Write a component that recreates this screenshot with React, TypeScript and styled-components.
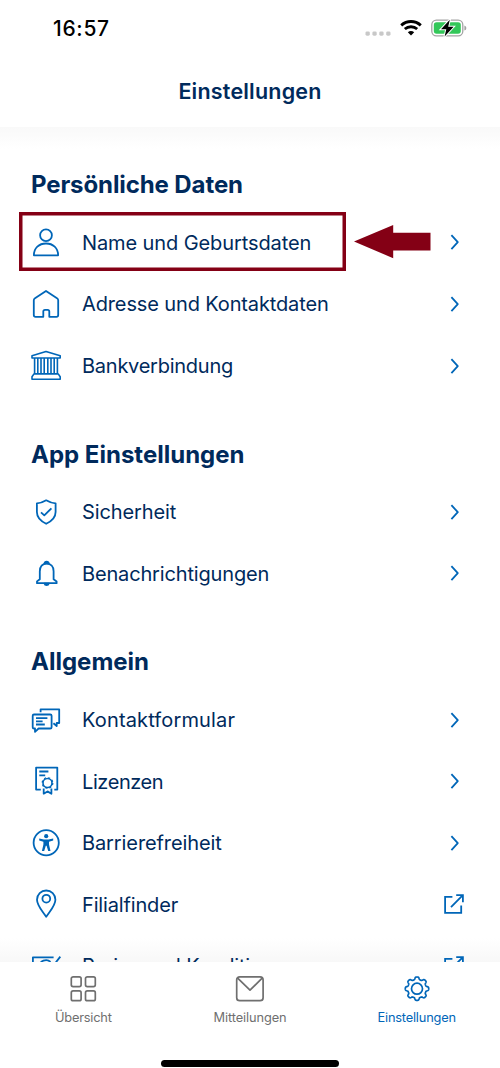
import React from "react";
import styled, { createGlobalStyle } from "styled-components";

const navy = "#002a5c";
const blue = "#0066b8";
const grey = "#6f6f6f";
const crimson = "#840015";

const GlobalStyle = createGlobalStyle`
  * { box-sizing: border-box; }
  body { margin: 0; background: #fff; }
  h1, h2 { margin: 0; }
`;

const Screen = styled.div`
  display: flex;
  flex-direction: column;
  width: 500px;
  height: 1068px;
  overflow: hidden;
  background: #fff;
  color: ${navy};
  font-family: Inter, "Liberation Sans", sans-serif;
`;

const StatusBar = styled.div`
  display: flex;
  justify-content: space-between;
  align-items: center;
  flex: none;
  height: 56px;
  padding: 0 33px 0 53px;
  color: #000;
`;

const Clock = styled.span`
  font-size: 21px;
  font-weight: 550;
  letter-spacing: 0.7px;
`;

const StatusIcons = styled.div`
  display: flex;
  align-items: center;
  gap: 9px;
`;

const Header = styled.header`
  display: flex;
  justify-content: center;
  flex: none;
  height: 71px;
  padding-top: 21px;
`;

const Title = styled.h1`
  font-size: 21.5px;
  line-height: 28px;
  font-weight: 600;
  letter-spacing: 0.2px;
`;

const Content = styled.main`
  flex: 1;
  min-height: 0;
  overflow: hidden;
  padding: 0 36px 0 30px;
  background:
    linear-gradient(#f9f9f9, #fff) top / 100% 22px no-repeat,
    linear-gradient(#fff, #f8f8f8) bottom / 100% 24px no-repeat;
`;

const SectionTitle = styled.h2<{ $track?: number }>`
  height: 84.6px;
  padding: 42.2px 0 0 1px;
  font-size: 24px;
  line-height: 32px;
  font-weight: 700;
  letter-spacing: ${(p) => p.$track ?? 0}px;
`;

const Row = styled.div`
  position: relative;
  display: flex;
  align-items: center;
  height: 61.6px;
`;

const Label = styled.span<{ $track?: number }>`
  flex: 1;
  padding: 1px 0 0 20px;
  font-size: 20px;
  line-height: 28px;
  white-space: nowrap;
  letter-spacing: ${(p) => p.$track ?? 0}px;
`;

const Icon = styled.svg`
  flex: none;
  fill: none;
  stroke: ${blue};
  stroke-width: 1.8;
  stroke-linejoin: round;
`;

const Highlight = styled.div`
  position: absolute;
  left: -11px;
  top: 0.5px;
  width: 327px;
  height: 59px;
  border: 3px solid ${crimson};
  box-shadow: inset 0 0 0 0.5px ${crimson};
`;

const Pointer = styled.svg`
  position: absolute;
  left: 323px;
  top: 12px;
  fill: ${crimson};
`;

const TabBar = styled.nav`
  display: grid;
  grid-template-columns: repeat(3, 1fr);
  flex: none;
  height: 84.5px;
  padding-top: 11.5px;
  background: #fff;
`;

const Tab = styled.div<{ $active?: boolean }>`
  display: flex;
  flex-direction: column;
  align-items: center;
  gap: 6px;
  color: ${(p) => (p.$active ? blue : grey)};
`;

const TabIcon = styled.svg`
  fill: none;
  stroke: currentColor;
  stroke-width: 1.7;
  stroke-linejoin: round;
`;

const TabLabel = styled.span<{ $track?: number }>`
  font-size: 12.8px;
  line-height: 18px;
  letter-spacing: ${(p) => p.$track ?? 0}px;
`;

const HomeArea = styled.div`
  display: flex;
  justify-content: center;
  flex: none;
  height: 22px;
  padding-top: 14px;
`;

const HomeIndicator = styled.div`
  width: 178px;
  height: 6.5px;
  border-radius: 4px;
  background: #000;
`;

const glyphs = {
  user: (
    <>
      <circle cx="16" cy="9.2" r="5.9" />
      <path d="M3.9 29.3C3.9 22 9 17.5 16 17.5S28.1 22 28.1 29.3Z" />
    </>
  ),
  home: (
    <path d="M16 3 27 10.2Q28.2 11 28.2 12.3V27Q28.2 28.8 26.4 28.8H19.3V23.5Q19.3 21.8 17.6 21.8H15Q13.3 21.8 13.3 23.5V28.8H5.6Q3.8 28.8 3.8 27V12.3Q3.8 11 5 10.2Z" />
  ),
  bank: (
    <path
      d="M2 8V5.8L16 1.5 30.2 5.8V8ZM4.6 8.2V23.8M7.8 8.2V23.8M11 8.2V23.8M14.2 8.2V23.8M17.8 8.2V23.8M21 8.2V23.8M24.2 8.2V23.8M27.4 8.2V23.8M2 29.3V26.8L4 23.9H28.2L30.2 26.8V29.3Z"
      strokeWidth="1.6"
    />
  ),
  shield: (
    <>
      <path d="M16.2 4.3C19.5 6.3 22.5 7.2 25.6 7.3V16C25.6 21.5 22 25 16.2 27.8 10.4 25 6.9 21.5 6.9 16V7.3C10 7.2 13 6.3 16.2 4.3Z" />
      <path d="M11 16.4 14.3 19.4 21.4 12.3" />
    </>
  ),
  bell: (
    <>
      <path d="M7 26.2V24.4L9.8 22.2V14.2C9.8 9.6 12.4 6.6 16.6 6.6S23.6 9.6 23.6 14.2V22.2L26.6 24.4V26.2Z" />
      <path d="M14.3 6.6Q14.5 4.5 16.6 4.5T19 6.6ZM14.3 26.5Q14.7 28.2 16.6 28.2T19 26.5Z" fill={blue} strokeWidth="1.4" />
    </>
  ),
  chat: (
    <>
      <path d="M4 10.5H20.2Q21.6 10.5 21.6 11.8V23.2Q21.6 24.5 20.2 24.5H8.6L5 27.8V24.5H4Q2.7 24.5 2.7 23.2V11.8Q2.7 10.5 4 10.5Z" />
      <path d="M6 14.2H17.4M6 17.4H12.6M6 20.5H14.8M10.6 8.3V5.3H29.2V19H26.7V22L23.4 19.2" />
    </>
  ),
  licence: (
    <>
      <path d="M10.8 24.6H6.1V2.6H27.3V24.6H24.3M9.3 6.5H18.4M9.3 10.4H15.2" />
      <circle cx="17.5" cy="18" r="4.5" strokeWidth="1.6" />
      <circle cx="17.5" cy="18" r="5.3" strokeWidth="1.2" strokeDasharray="2.08 2.08" />
      <path d="M13.7 23.5V28.7L17.5 26.4 21.4 28.7V23.5" />
    </>
  ),
  access: (
    <>
      <circle cx="16.2" cy="15.8" r="12.6" />
      <circle cx="16.2" cy="9.2" r="2.1" fill={blue} stroke="none" />
      <path
        d="M9.2 11.6 14 12.4H18.4L23.2 11.6V13.4L19 14.8V17.5L20.5 24H18.2L16.6 18.8H15.8L14.2 24H11.9L13.4 17.5V14.8L9.2 13.4Z"
        fill={blue}
        stroke="none"
      />
    </>
  ),
  pin: (
    <>
      <path d="M16.2 28.8C12 22.5 7 17.5 7 11.7A9.2 9.2 0 0 1 25.4 11.7C25.4 17.5 20.4 22.5 16.2 28.8Z" />
      <circle cx="16.3" cy="10.7" r="3.9" />
    </>
  ),
  money: (
    <path d="M23.6 7.3H2.9V24H28M10 16A6 5 0 0 1 20.5 12M30.3 6.6 22 17.4" />
  ),
};

type Glyph = keyof typeof glyphs;

const Trailing = ({ external }: { external?: boolean }) => (
  <Icon width="20" height="20" viewBox="0 0 20 20">
    {external ? (
      <path d="M8.4 2.8H1.1V18.9H17.2V11.4M7 13.2 18.6 1.4M12.2 1.1H18.9V8.2" strokeLinejoin="miter" />
    ) : (
      <path d="M7.4 3.1 13.8 10.2 7.4 17.2" />
    )}
  </Icon>
);

interface Item {
  icon: Glyph;
  label: string;
  track?: number;
  external?: boolean;
  highlighted?: boolean;
}

const sections: { title: string; track?: number; items: Item[] }[] = [
  {
    title: "Persönliche Daten",
    track: -0.1,
    items: [
      { icon: "user", label: "Name und Geburtsdaten", track: -0.1, highlighted: true },
      { icon: "home", label: "Adresse und Kontaktdaten", track: -0.13 },
      { icon: "bank", label: "Bankverbindung", track: -0.25 },
    ],
  },
  {
    title: "App Einstellungen",
    items: [
      { icon: "shield", label: "Sicherheit", track: -0.1 },
      { icon: "bell", label: "Benachrichtigungen", track: -0.16 },
    ],
  },
  {
    title: "Allgemein",
    items: [
      { icon: "chat", label: "Kontaktformular", track: 0.14 },
      { icon: "licence", label: "Lizenzen", track: -0.42 },
      { icon: "access", label: "Barrierefreiheit", track: -0.1 },
      { icon: "pin", label: "Filialfinder", track: -0.15, external: true },
      { icon: "money", label: "Preise und Konditionen", track: -0.15, external: true },
    ],
  },
];

const gearPath = (() => {
  const points: string[] = [];
  const steps = 192;
  for (let i = 0; i < steps; i++) {
    const angle = (i * 2 * Math.PI) / steps;
    const radius = 10.5 + 1.25 * Math.tanh(2 * Math.cos(8 * angle));
    points.push(`${(14 + radius * Math.sin(angle)).toFixed(2)} ${(14 - radius * Math.cos(angle)).toFixed(2)}`);
  }
  return `M${points.join("L")}Z`;
})();

export default function App() {
  return (
    <Screen>
      <GlobalStyle />
      <StatusBar>
        <Clock>16:57</Clock>
        <StatusIcons>
          <svg width="26" height="18" viewBox="0 0 26 18" fill="#c8c8c8">
            {[0.5, 7.4, 14.3, 21.2].map((x) => (
              <rect key={x} x={x} y="12.4" width="4.3" height="4.3" rx="1.4" />
            ))}
          </svg>
          <svg width="22" height="18" viewBox="0 0 22 18" fill="none" stroke="#000" strokeWidth="2.9">
            <path d="M1.2 6.3Q5.5 2.5 11 2.5T20.8 6.3M4.8 10Q7.5 7.7 11 7.7T17.2 10" />
            <path d="M7.8 13.2Q11 10.7 14.2 13.2L11 16.6Z" fill="#000" stroke="none" />
          </svg>
          <svg width="36" height="18" viewBox="0 0 36 18">
            <rect x="0.8" y="1.2" width="31" height="15.6" rx="4.6" fill="#fff" stroke="#a3a3a3" strokeWidth="1.3" />
            <rect x="2.8" y="3.2" width="27" height="11.6" rx="2.8" fill="#33c759" />
            <path d="M33.4 6.4Q35.4 7 35.4 9T33.4 11.6Z" fill="#a3a3a3" />
            <path
              d="M18.8.8 10 10.2H15.3L13.6 17.4 22.6 7.8H17.2Z"
              fill="#000"
              stroke="#fff"
              strokeWidth="2"
              paintOrder="stroke"
            />
          </svg>
        </StatusIcons>
      </StatusBar>
      <Header>
        <Title>Einstellungen</Title>
      </Header>
      <Content>
        {sections.map((section) => (
          <section key={section.title}>
            <SectionTitle $track={section.track}>{section.title}</SectionTitle>
            {section.items.map((item) => (
              <Row key={item.label}>
                <Icon width="32" height="32" viewBox="0 0 32 32">
                  {glyphs[item.icon]}
                </Icon>
                <Label $track={item.track}>{item.label}</Label>
                <Trailing external={item.external} />
                {item.highlighted && (
                  <>
                    <Highlight />
                    <Pointer width="78" height="36" viewBox="0 0 78 36">
                      <path d="M1 17.5 40.2 1V8.8H77.5V26.6H40.2V34.2Z" />
                    </Pointer>
                  </>
                )}
              </Row>
            ))}
          </section>
        ))}
      </Content>
      <TabBar>
        <Tab>
          <TabIcon width="30" height="30" viewBox="0 0 30 30">
            <rect x="3.3" y="3.8" width="9.8" height="9.8" rx="1.8" />
            <rect x="17.5" y="3.8" width="9.8" height="9.8" rx="1.8" />
            <rect x="3.3" y="17.9" width="9.8" height="9.8" rx="1.8" />
            <rect x="17.5" y="17.9" width="9.8" height="9.8" rx="1.8" />
          </TabIcon>
          <TabLabel $track={-0.2}>Übersicht</TabLabel>
        </Tab>
        <Tab>
          <TabIcon width="30" height="30" viewBox="0 0 30 30">
            <rect x="1.7" y="3.8" width="26.4" height="23.9" rx="3" />
            <path d="M2.4 4.8 15 17.2 27.4 4.8" />
          </TabIcon>
          <TabLabel $track={-0.1}>Mitteilungen</TabLabel>
        </Tab>
        <Tab $active>
          <TabIcon width="30" height="30" viewBox="-1 -1.7 30 30">
            <path d={gearPath} />
            <circle cx="14" cy="14" r="5.5" />
          </TabIcon>
          <TabLabel $track={-0.2}>Einstellungen</TabLabel>
        </Tab>
      </TabBar>
      <HomeArea>
        <HomeIndicator />
      </HomeArea>
    </Screen>
  );
}
